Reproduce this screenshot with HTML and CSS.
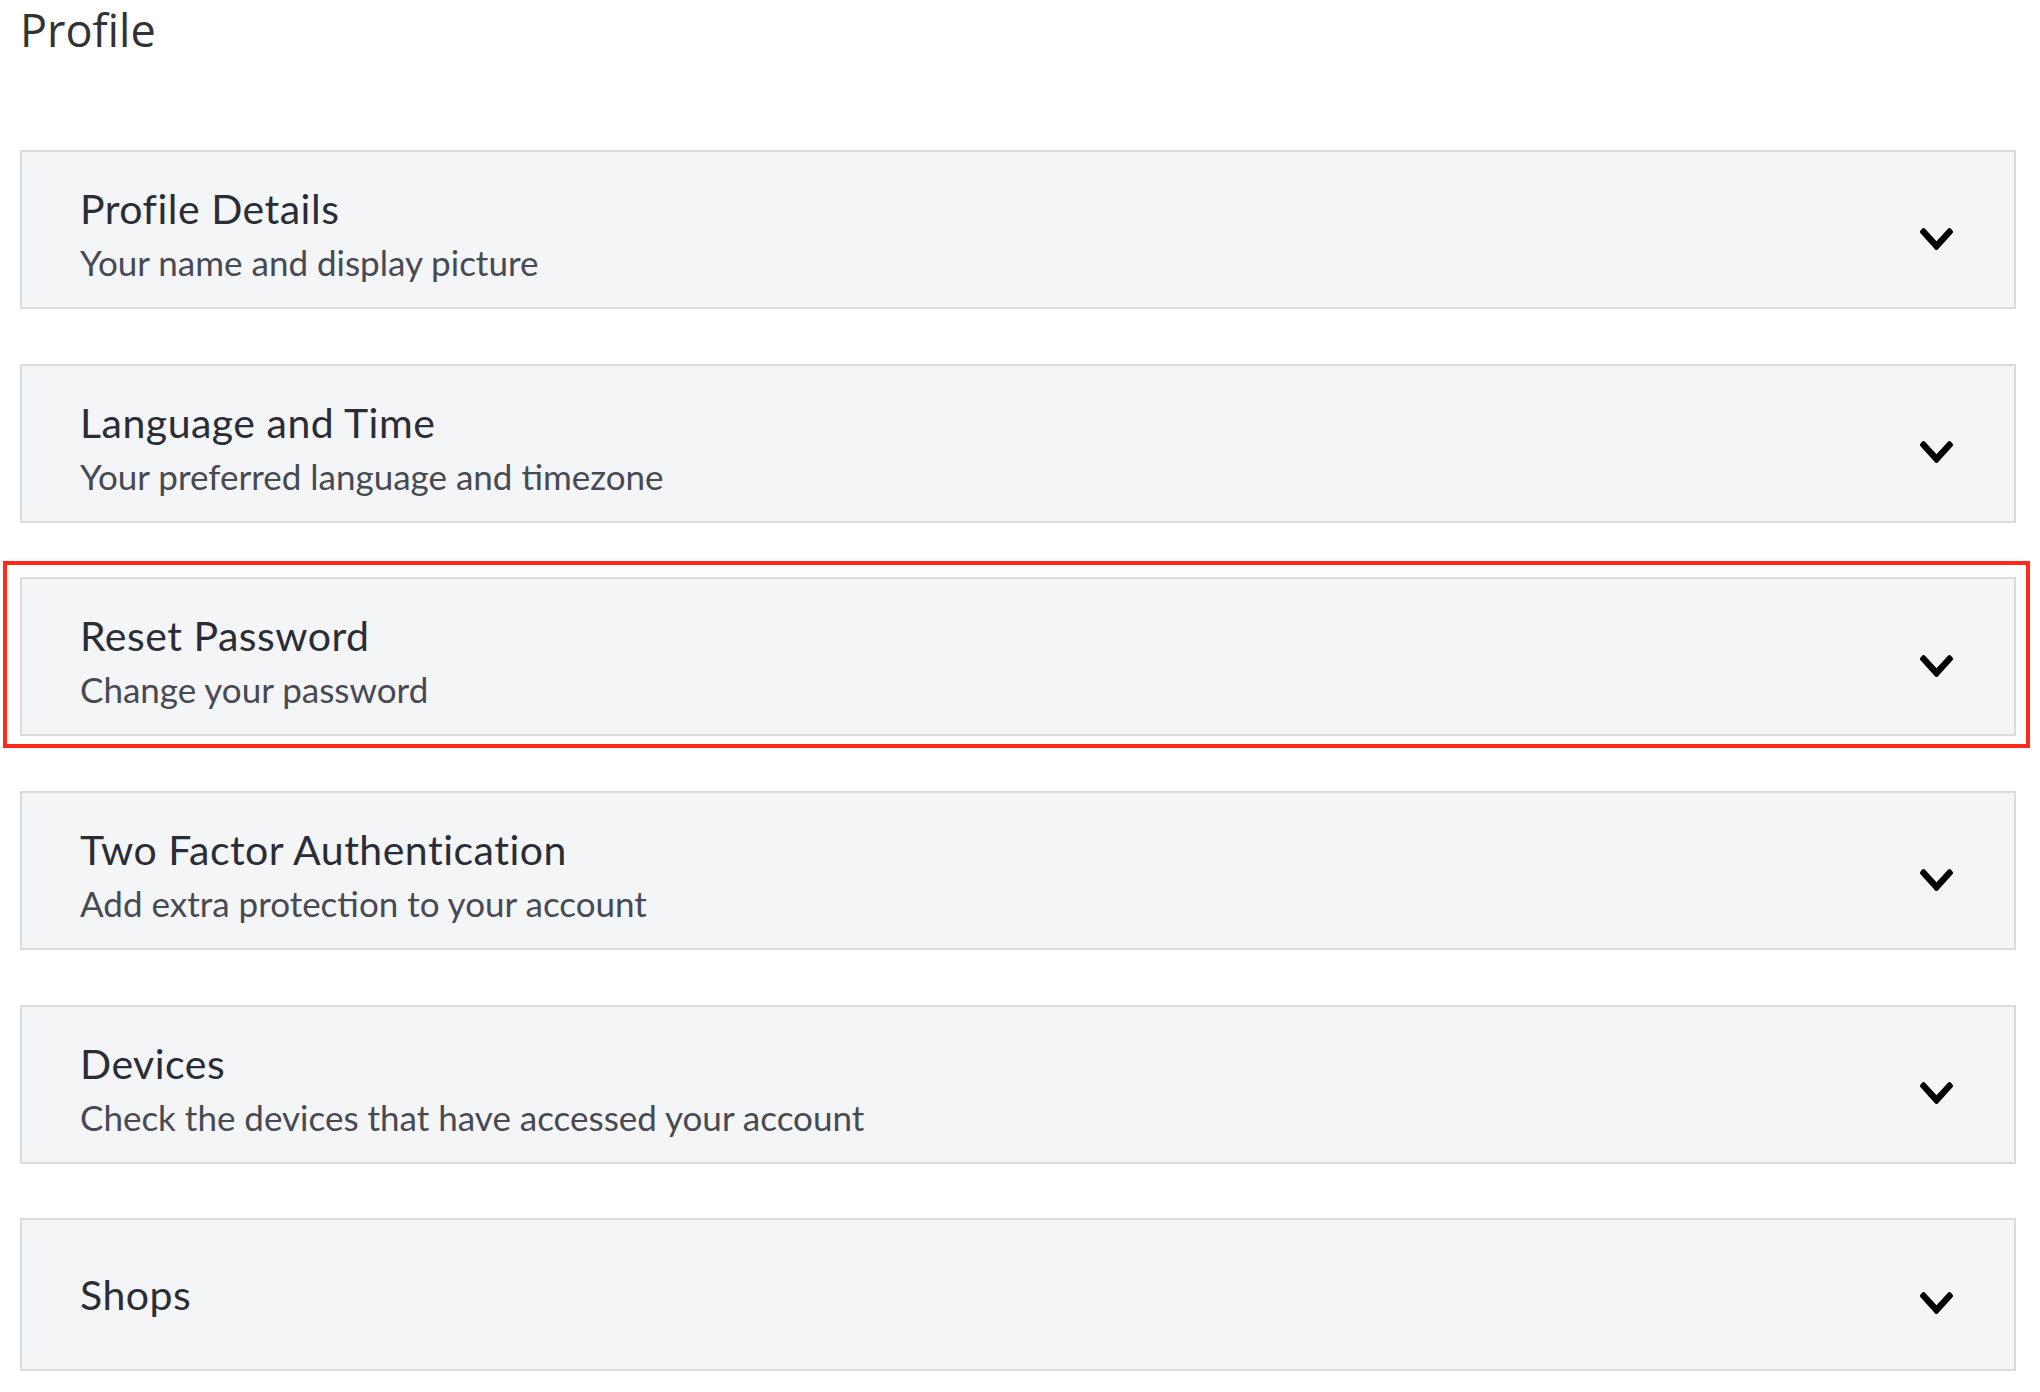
FILE: index.html
```html
<!DOCTYPE html>
<html lang="en">
<head>
<meta charset="utf-8">
<title>Profile</title>
<link rel="stylesheet" href="styles.css">
</head>
<body>
<main class="page">
  <h1 class="page-title">Profile</h1>
  <div class="sections">
    <section class="panel">
      <div class="panel-text">
        <h2 class="panel-title">Profile Details</h2>
        <p class="panel-sub">Your name and display picture</p>
      </div>
      <svg class="chevron" viewBox="5.66 123.5 436.6 265" preserveAspectRatio="none" aria-hidden="true"><path d="M207.029 381.476L12.686 187.132c-9.373-9.373-9.373-24.569 0-33.941l22.667-22.667c9.357-9.357 24.522-9.375 33.901-.04L224 284.505l154.745-154.021c9.379-9.335 24.544-9.317 33.901.04l22.667 22.667c9.373 9.373 9.373 24.569 0 33.941L240.971 381.476c-9.373 9.372-24.569 9.372-33.942 0z"/></svg>
    </section>
    <section class="panel">
      <div class="panel-text">
        <h2 class="panel-title">Language and Time</h2>
        <p class="panel-sub">Your preferred language and timezone</p>
      </div>
      <svg class="chevron" viewBox="5.66 123.5 436.6 265" preserveAspectRatio="none" aria-hidden="true"><path d="M207.029 381.476L12.686 187.132c-9.373-9.373-9.373-24.569 0-33.941l22.667-22.667c9.357-9.357 24.522-9.375 33.901-.04L224 284.505l154.745-154.021c9.379-9.335 24.544-9.317 33.901.04l22.667 22.667c9.373 9.373 9.373 24.569 0 33.941L240.971 381.476c-9.373 9.372-24.569 9.372-33.942 0z"/></svg>
    </section>
    <div class="highlight-wrap">
      <section class="panel">
        <div class="panel-text">
          <h2 class="panel-title">Reset Password</h2>
          <p class="panel-sub">Change your password</p>
        </div>
        <svg class="chevron" viewBox="5.66 123.5 436.6 265" preserveAspectRatio="none" aria-hidden="true"><path d="M207.029 381.476L12.686 187.132c-9.373-9.373-9.373-24.569 0-33.941l22.667-22.667c9.357-9.357 24.522-9.375 33.901-.04L224 284.505l154.745-154.021c9.379-9.335 24.544-9.317 33.901.04l22.667 22.667c9.373 9.373 9.373 24.569 0 33.941L240.971 381.476c-9.373 9.372-24.569 9.372-33.942 0z"/></svg>
      </section>
      <span class="highlight"></span>
    </div>
    <section class="panel">
      <div class="panel-text">
        <h2 class="panel-title">Two Factor Authentication</h2>
        <p class="panel-sub">Add extra protection to your account</p>
      </div>
      <svg class="chevron" viewBox="5.66 123.5 436.6 265" preserveAspectRatio="none" aria-hidden="true"><path d="M207.029 381.476L12.686 187.132c-9.373-9.373-9.373-24.569 0-33.941l22.667-22.667c9.357-9.357 24.522-9.375 33.901-.04L224 284.505l154.745-154.021c9.379-9.335 24.544-9.317 33.901.04l22.667 22.667c9.373 9.373 9.373 24.569 0 33.941L240.971 381.476c-9.373 9.372-24.569 9.372-33.942 0z"/></svg>
    </section>
    <section class="panel">
      <div class="panel-text">
        <h2 class="panel-title">Devices</h2>
        <p class="panel-sub">Check the devices that have accessed your account</p>
      </div>
      <svg class="chevron" viewBox="5.66 123.5 436.6 265" preserveAspectRatio="none" aria-hidden="true"><path d="M207.029 381.476L12.686 187.132c-9.373-9.373-9.373-24.569 0-33.941l22.667-22.667c9.357-9.357 24.522-9.375 33.901-.04L224 284.505l154.745-154.021c9.379-9.335 24.544-9.317 33.901.04l22.667 22.667c9.373 9.373 9.373 24.569 0 33.941L240.971 381.476c-9.373 9.372-24.569 9.372-33.942 0z"/></svg>
    </section>
    <section class="panel panel-single">
      <div class="panel-text">
        <h2 class="panel-title">Shops</h2>
      </div>
      <svg class="chevron" viewBox="5.66 123.5 436.6 265" preserveAspectRatio="none" aria-hidden="true"><path d="M207.029 381.476L12.686 187.132c-9.373-9.373-9.373-24.569 0-33.941l22.667-22.667c9.357-9.357 24.522-9.375 33.901-.04L224 284.505l154.745-154.021c9.379-9.335 24.544-9.317 33.901.04l22.667 22.667c9.373 9.373 9.373 24.569 0 33.941L240.971 381.476c-9.373 9.372-24.569 9.372-33.942 0z"/></svg>
    </section>
  </div>
</main>
</body>
</html>
```

FILE: styles.css
```css
html, body {
  margin: 0;
  padding: 0;
  background: #ffffff;
}

.page {
  padding: 0 24px 0 20px;
  font-family: "Lato", "Liberation Sans", sans-serif;
}

.page-title {
  margin: 0;
  padding-top: 4px;
  font-family: "Open Sans", "Noto Sans", sans-serif;
  font-weight: 400;
  font-size: 45px;
  line-height: 52px;
  color: #333333;
}

.sections {
  margin-top: 94px;
  display: flex;
  flex-direction: column;
  gap: 54.7px;
}

.panel {
  display: flex;
  align-items: center;
  justify-content: space-between;
  background: #f4f5f7;
  border: 2px solid #dcdcdc;
  padding: 33px 61px 25px 58px;
}

.panel-single {
  padding-top: 50.5px;
  padding-bottom: 50.5px;
}

.panel-text {
  display: flex;
  flex-direction: column;
}

.panel-title {
  margin: 0;
  font-family: "Lato", sans-serif;
  font-weight: 400;
  font-size: 41px;
  letter-spacing: 0.5px;
  line-height: 48px;
  color: #2a2c36;
}

.panel-sub {
  margin: 9px 0 0;
  font-family: "Lato", sans-serif;
  font-weight: 400;
  font-size: 35px;
  line-height: 40px;
  color: #474953;
}

.chevron {
  width: 33px;
  height: 22px;
  flex: none;
  margin-top: 10px;
  fill: #000000;
}

.panel-single .chevron {
  margin-top: 16px;
}

.highlight-wrap {
  position: relative;
}

.highlight {
  position: absolute;
  top: -16px;
  left: -17px;
  right: -14px;
  bottom: -12px;
  border: 4px solid #ff2a1c;
  pointer-events: none;
}
```
